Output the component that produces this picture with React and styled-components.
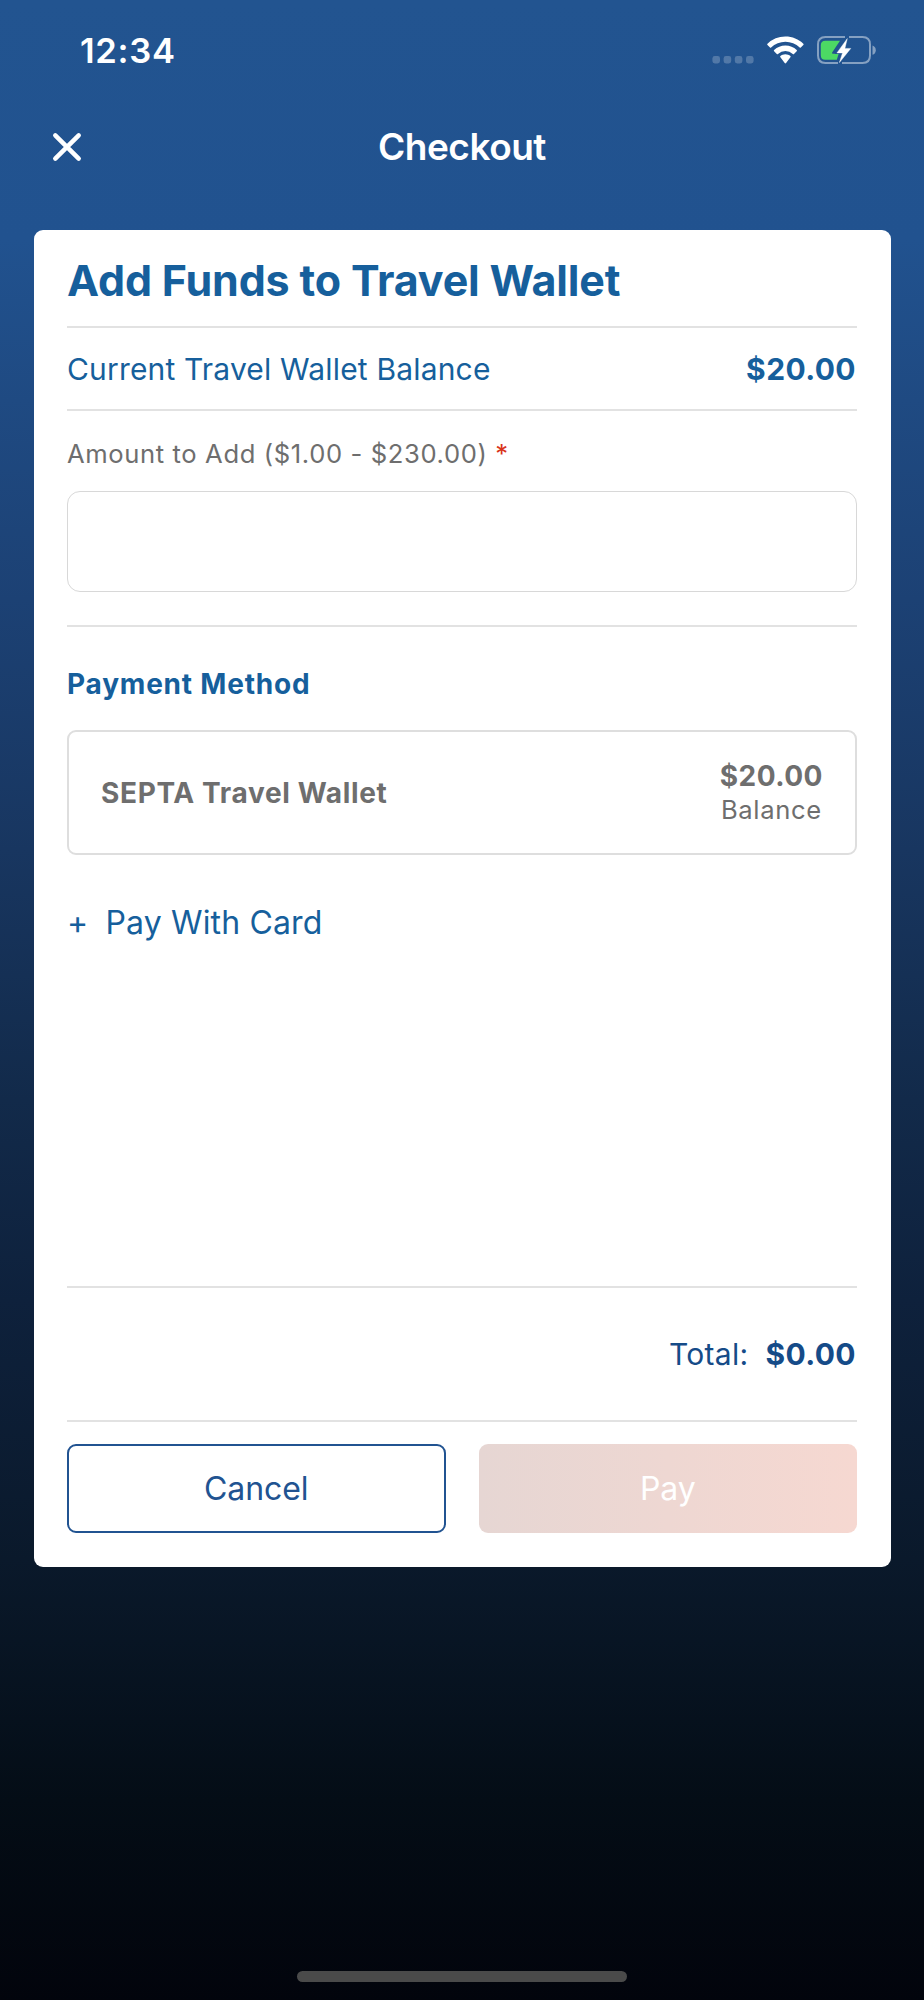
import React, { useState } from "react";
import styled, { createGlobalStyle } from "styled-components";

const GlobalStyle = createGlobalStyle`
  *, *::before, *::after {
    box-sizing: border-box;
  }

  body {
    margin: 0;
    font-family: Inter, "Liberation Sans", sans-serif;
  }
`;

const Screen = styled.div`
  display: flex;
  flex-direction: column;
  width: 924px;
  height: 2000px;
  padding-bottom: 18px;
  background: linear-gradient(
    to bottom,
    #225490 0px,
    #21528f 240px,
    #1f4a82 400px,
    #1c4174 600px,
    #183660 850px,
    #122a4a 1100px,
    #0e213c 1300px,
    #0a192b 1560px,
    #040d16 1800px,
    #02040c 2000px
  );
`;

const StatusBar = styled.div`
  display: flex;
  align-items: center;
  justify-content: space-between;
  height: 100px;
  padding: 0 47px 0 80px;
  color: #fff;
`;

const Time = styled.span`
  font-size: 34.6px;
  font-weight: 600;
  letter-spacing: 0.7px;
`;

const StatusIcons = styled.div`
  display: flex;
  align-items: center;
  gap: 13px;

  svg {
    display: block;
  }
`;

const Header = styled.header`
  display: grid;
  grid-template-columns: 60px 1fr 60px;
  align-items: center;
  height: 130px;
  padding: 0 37px 36px;
  color: #fff;
`;

const CloseButton = styled.button`
  display: flex;
  align-items: center;
  justify-content: center;
  width: 60px;
  height: 60px;
  padding: 0;
  border: none;
  background: none;
  color: inherit;
`;

const HeaderTitle = styled.h1`
  margin: 0;
  padding-bottom: 1px;
  font-size: 37px;
  font-weight: 600;
  letter-spacing: -0.5px;
  text-align: center;
`;

const Card = styled.main`
  display: flex;
  flex-direction: column;
  height: 1337px;
  margin: 0 33.5px;
  padding: 0 33.5px 34px;
  border-radius: 9px;
  background: #fff;
`;

const CardTitle = styled.h2`
  display: flex;
  align-items: center;
  height: 98px;
  margin: 0;
  padding-top: 3px;
  border-bottom: 2px solid #e2e2e2;
  color: #165f9c;
  font-size: 43px;
  font-weight: 700;
  letter-spacing: -0.17px;
`;

const BalanceRow = styled.div`
  display: flex;
  align-items: center;
  justify-content: space-between;
  height: 83px;
  border-bottom: 2px solid #e2e2e2;
  color: #165f9c;
  font-size: 30px;
  letter-spacing: 0.17px;
`;

const Amount = styled.strong`
  margin-right: 1px;
  font-weight: 700;
  letter-spacing: 0.4px;
`;

const Field = styled.div`
  padding: 26px 0 33px;
  border-bottom: 2px solid #e2e2e2;
`;

const Label = styled.label`
  display: block;
  margin-bottom: 21px;
  color: #6e6e6e;
  font-size: 25.6px;
  line-height: 33px;
  letter-spacing: 0.62px;
`;

const Required = styled.span`
  color: #d9341a;
`;

const Input = styled.input`
  display: block;
  width: 100%;
  height: 101px;
  padding: 0 24px;
  border: 1px solid #d8d8d8;
  border-radius: 13px;
  outline: none;
  background: #fff;
  color: #6e6e6e;
  font: inherit;
  font-size: 30px;
`;

const SectionTitle = styled.h3`
  margin: 40px 0 29px;
  color: #165f9c;
  font-size: 28px;
  font-weight: 700;
  line-height: 34px;
  letter-spacing: 0.79px;
`;

const Method = styled.div`
  display: flex;
  align-items: center;
  justify-content: space-between;
  height: 125px;
  padding: 0 32px;
  border: 2px solid #dedede;
  border-radius: 9px;
  color: #6e6e6e;
`;

const MethodName = styled.span`
  font-size: 28px;
  font-weight: 700;
  letter-spacing: 0.65px;
`;

const MethodBalance = styled.div`
  display: flex;
  flex-direction: column;
  align-items: center;
  font-size: 25.6px;
  line-height: 33px;
  letter-spacing: 0.65px;

  strong {
    font-size: 28px;
    letter-spacing: 0.5px;
  }
`;

const AddCard = styled.button`
  display: flex;
  align-items: center;
  gap: 17px;
  margin-top: 48px;
  padding: 0;
  border: none;
  background: none;
  color: #165f9c;
  font: inherit;
  font-size: 32px;
  line-height: 40px;
  letter-spacing: 0.15px;
`;

const Plus = styled.span`
  width: 21.5px;
`;

const Total = styled.div`
  display: flex;
  align-items: center;
  justify-content: flex-end;
  gap: 17px;
  height: 136px;
  margin-top: auto;
  border-top: 2px solid #e2e2e2;
  border-bottom: 2px solid #e2e2e2;
  color: #154b88;
  font-size: 30px;
  letter-spacing: 0.3px;
`;

const Actions = styled.div`
  display: grid;
  grid-template-columns: 1fr 1fr;
  gap: 33px;
  margin-top: 22px;
`;

const Button = styled.button`
  height: 89px;
  padding: 0;
  border: ${({ $primary }) => ($primary ? "none" : "2px solid #215391")};
  border-radius: 9px;
  background: ${({ $primary }) =>
    $primary ? "linear-gradient(to right, #e6d6d3, #f6d8d1)" : "#fff"};
  color: ${({ $primary }) => ($primary ? "#fff" : "#215391")};
  font: inherit;
  font-size: 32px;
  letter-spacing: -0.1px;
`;

const HomeIndicator = styled.div`
  width: 330px;
  height: 11px;
  margin: auto auto 0;
  border-radius: 6px;
  background: #4a4a4a;
`;

const SignalIcon = () => (
  <svg width="42" height="30" viewBox="0 0 42 30" fill="#fff" fillOpacity="0.22">
    <rect x="0.4" y="21" width="7.6" height="7.4" rx="2.4" />
    <rect x="11.6" y="21" width="7.6" height="7.4" rx="2.4" />
    <rect x="22.8" y="21" width="7.6" height="7.4" rx="2.4" />
    <rect x="34" y="21" width="7.6" height="7.4" rx="2.4" />
  </svg>
);

const WifiIcon = () => (
  <svg width="37" height="30" viewBox="0 0 37 30" fill="#fff">
    <path d="M18.4 1.6c6.9 0 13.3 2.7 17.9 7.2.4.4.4.8 0 1.2l-2.5 2.6c-.4.3-.8.3-1.1 0A20.6 20.6 0 0 0 4.1 12.6c-.3.3-.8.3-1.1 0L.5 10c-.4-.4-.4-.8 0-1.2A25.6 25.6 0 0 1 18.4 1.6z" />
    <path d="M18.4 10.6c4.3 0 8.3 1.7 11.3 4.5.4.4.4.8 0 1.2l-2.7 2.7c-.4.4-.8.3-1.2 0a10.9 10.9 0 0 0-14.8 0c-.4.3-.8.4-1.2 0l-2.7-2.7c-.4-.4-.4-.8 0-1.2a16.5 16.5 0 0 1 11.3-4.5z" />
    <path d="M18.4 19.2c2 0 3.7.7 5 1.9.4.4.4.8 0 1.2l-4.3 5.7c-.4.5-1 .5-1.4 0l-4.3-5.7c-.4-.4-.4-.8 0-1.2 1.3-1.2 3-1.9 5-1.9z" />
  </svg>
);

const BatteryIcon = () => (
  <svg width="60" height="30" viewBox="0 0 60 30" fill="none">
    <path
      d="M28 2H8.5C3.5 2 1 4.5 1 9.5v11C1 25.5 3.5 28 8.5 28H21M32 2h13.5C50.5 2 53 4.5 53 9.5v11c0 5-2.5 7.500-7.500 7.500H25"
      stroke="#fff"
      strokeOpacity="0.45"
      strokeWidth="2"
    />
    <path d="M55.5 10.5c2 .6 3.3 2.4 3.3 4.700s-1.3 4-3.3 4.600z" fill="#fff" fillOpacity="0.45" />
    <path
      d="M8.300 5.800H23L15.300 17.200c-.5.9-.2 1.500.8 1.500h5.600l-1.900 6.100H8.300c-3 0-4.500-1.500-4.500-4.500v-10c0-3 1.500-4.500 4.500-4.500z"
      fill="#4cd964"
    />
    <path
      d="M30.300 3.600L19.900 17.900h5.600L22.400 27.600 33.800 13.400h-5.900z"
      stroke="#225490"
      strokeWidth="2.400"
    />
    <path
      d="M30.300 3.600L19.900 17.900h5.600L22.400 27.600 33.800 13.400h-5.900z"
      fill="#fff"
      stroke="#fff"
      strokeWidth="0.400"
    />
  </svg>
);

const CloseIcon = () => (
  <svg width="30" height="30" viewBox="0 0 30 30">
    <path
      d="M3.3 3.3l23.4 23.4M26.7 3.3L3.3 26.7"
      stroke="currentColor"
      strokeWidth="4.5"
      strokeLinecap="round"
    />
  </svg>
);

function App() {
  const [amount, setAmount] = useState("");

  return (
    <>
      <GlobalStyle />
      <Screen>
        <StatusBar>
          <Time>12:34</Time>
          <StatusIcons>
            <SignalIcon />
            <WifiIcon />
            <BatteryIcon />
          </StatusIcons>
        </StatusBar>

        <Header>
          <CloseButton aria-label="Close">
            <CloseIcon />
          </CloseButton>
          <HeaderTitle>Checkout</HeaderTitle>
        </Header>

        <Card>
          <CardTitle>Add Funds to Travel Wallet</CardTitle>
          <BalanceRow>
            <span>Current Travel Wallet Balance</span>
            <Amount>$20.00</Amount>
          </BalanceRow>
          <Field>
            <Label htmlFor="amount">
              Amount to Add ($1.00 - $230.00) <Required>*</Required>
            </Label>
            <Input
              id="amount"
              inputMode="decimal"
              value={amount}
              onChange={(e) => setAmount(e.target.value)}
            />
          </Field>

          <SectionTitle>Payment Method</SectionTitle>
          <Method>
            <MethodName>SEPTA Travel Wallet</MethodName>
            <MethodBalance>
              <strong>$20.00</strong>
              <span>Balance</span>
            </MethodBalance>
          </Method>
          <AddCard>
            <Plus>+</Plus>
            <span>Pay With Card</span>
          </AddCard>

          <Total>
            <span>Total:</span>
            <Amount>$0.00</Amount>
          </Total>
          <Actions>
            <Button>Cancel</Button>
            <Button $primary disabled={!amount}>
              Pay
            </Button>
          </Actions>
        </Card>

        <HomeIndicator />
      </Screen>
    </>
  );
}

export default App;
